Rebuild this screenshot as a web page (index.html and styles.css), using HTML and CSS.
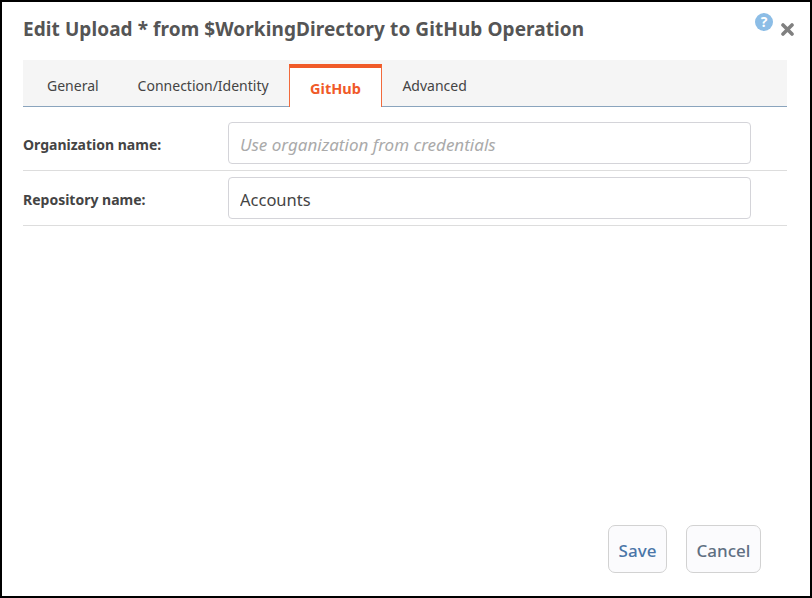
FILE: index.html
```html
<!DOCTYPE html>
<html lang="en">
<head>
<meta charset="UTF-8">
<meta name="viewport" content="width=device-width, initial-scale=1.0">
<title>Edit Upload Operation</title>
<link rel="stylesheet" href="styles.css">
</head>
<body>
    <div class="dialog">
        <div class="dialog-header">
            <h1>Edit Upload * from $WorkingDirectory to GitHub Operation</h1>
            <div class="header-icons">
                <svg class="help-icon" width="18" height="18" viewBox="0 0 18 18">
                    <circle cx="9" cy="9" r="9" fill="#8cbde6"/>
                    <text x="9" y="14" text-anchor="middle" class="help-mark">?</text>
                </svg>
                <svg class="close-icon" width="13" height="13" viewBox="0 0 13 13">
                    <path d="M2 2 L11 11 M11 2 L2 11" stroke="#808080" stroke-width="3.6" stroke-linecap="round"/>
                </svg>
            </div>
        </div>

        <div class="tabs">
            <div class="tab">General</div>
            <div class="tab">Connection/Identity</div>
            <div class="tab active">GitHub</div>
            <div class="tab">Advanced</div>
        </div>

        <div class="form-row first-row">
            <label for="org">Organization name:</label>
            <input id="org" type="text" placeholder="Use organization from credentials">
        </div>
        <div class="form-row">
            <label for="repo">Repository name:</label>
            <input id="repo" type="text" value="Accounts">
        </div>

        <div class="dialog-footer">
            <button class="btn btn-save">Save</button>
            <button class="btn btn-cancel">Cancel</button>
        </div>
    </div>
</body>
</html>
```
FILE: styles.css
```css
html, body {
    margin: 0;
    padding: 0;
    height: 100%;
}
body {
    font-family: "Noto Sans", "Open Sans", sans-serif;
    background: #fff;
}
.dialog {
    box-sizing: border-box;
    height: 598px;
    border: 2px solid #000;
    padding: 0 23px 0 21px;
    display: flex;
    flex-direction: column;
}
.dialog-header {
    display: flex;
    justify-content: space-between;
    height: 58px;
}
h1 {
    margin: 15px 0 0;
    font-size: 19px;
    line-height: 25px;
    letter-spacing: 0.08px;
    font-weight: 700;
    color: #555;
}
.header-icons {
    display: flex;
    align-items: flex-start;
    gap: 8px;
    margin-right: -7px;
}
.help-icon {
    margin-top: 11px;
}
.help-mark {
    font-family: "Open Sans", sans-serif;
    font-size: 14px;
    font-weight: 700;
    fill: #fff;
}
.close-icon {
    margin-top: 21px;
}
.tabs {
    display: flex;
    align-items: flex-end;
    height: 47px;
    box-sizing: border-box;
    padding-left: 4.5px;
    background: #f5f5f5;
    border-bottom: 1px solid #8aa4bd;
}
.tab {
    box-sizing: border-box;
    height: 42px;
    padding: 12px 19.5px 0;
    font-size: 14px;
    line-height: 20px;
    color: #444;
}
.active {
    height: 43px;
    margin: 0 1px -1px;
    padding: 10px 20px 0;
    background: #fff;
    border: 1px solid #f26a3c;
    border-top: 4px solid #f05a28;
    border-bottom: 0;
    font-size: 14.5px;
    color: #f05a28;
    font-weight: 700;
}
.form-row {
    display: flex;
    align-items: center;
    height: 55px;
    box-sizing: border-box;
    border-bottom: 1px solid #ddd;
}
.first-row {
    height: 64px;
    padding-top: 9px;
}
label {
    width: 205px;
    padding-top: 2px;
    font-size: 14px;
    font-weight: 700;
    color: #444;
}
input {
    box-sizing: border-box;
    width: 523px;
    height: 42px;
    padding: 2px 11px 0;
    font-family: inherit;
    font-size: 16.5px;
    color: #444;
    border: 1px solid #d4d4d9;
    border-radius: 4px;
    outline: none;
}
input::placeholder {
    font-size: 17px;
    font-style: italic;
    color: #aaa;
}
.dialog-footer {
    margin-top: auto;
    display: flex;
    justify-content: flex-end;
    gap: 19px;
    padding: 0 26px 23px 0;
}
.btn {
    box-sizing: border-box;
    height: 48px;
    padding: 2px 10px 0;
    font-family: inherit;
    font-size: 17px;
    font-weight: 500;
    background: #fbfbfd;
    border: 1px solid #d2d2d2;
    border-radius: 7px;
    cursor: pointer;
}
.btn-save {
    width: 59px;
    padding: 2px 0 0;
    color: #4a76a8;
}
.btn-cancel {
    width: 75px;
    padding: 2px 0 0;
    color: #5f6f82;
}
```
